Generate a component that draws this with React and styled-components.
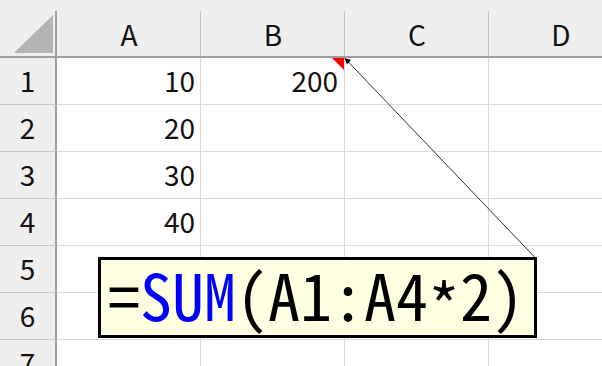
import React from "react";
import styled, { createGlobalStyle } from "styled-components";

const Global = createGlobalStyle`
  html, body { margin: 0; padding: 0; background: #fff; overflow: hidden; }
  body { width: 602px; height: 366px; }
`;

const Sheet = styled.div`
  position: relative;
  width: 602px;
  height: 366px;
  overflow: hidden;
  font-family: "Noto Sans CJK JP", "Noto Sans", sans-serif;
`;

const Grid = styled.div`
  display: grid;
  grid-template-columns: 57px repeat(4, 144px);
  grid-template-rows: 58px repeat(7, 47px);
`;

const Corner = styled.div`
  position: relative;
  background: #efefef;
  border-bottom: 2px solid #9f9f9f;
  display: flex;
  align-items: flex-end;
  justify-content: flex-end;
  padding: 0 4px 3px 0;
  &::after {
    content: "";
    position: absolute;
    right: 0;
    top: 11px;
    bottom: 0;
    width: 2px;
    background: #9f9f9f;
  }
`;

const SelectAll = styled.div`
  width: 39px;
  height: 38px;
  background: #b4b4b4;
  clip-path: polygon(100% 0, 100% 100%, 0 100%);
`;

const ColHeader = styled.div`
  position: relative;
  background: #efefef;
  border-bottom: 2px solid #9f9f9f;
  display: flex;
  align-items: center;
  justify-content: center;
  padding-top: 11px;
  font-size: 28px;
  color: #111;
  &::after {
    content: "";
    position: absolute;
    right: 0;
    top: 11px;
    bottom: 0;
    width: 1px;
    background: #c2c2c2;
  }
`;

const RowHeader = styled.div`
  background: #efefef;
  border-right: 2px solid #9f9f9f;
  border-bottom: 1px solid #c8c8c8;
  display: flex;
  align-items: center;
  justify-content: center;
  padding-bottom: 3px;
  font-size: 28px;
  color: #111;
`;

const Cell = styled.div`
  position: relative;
  border-right: 1px solid #dadada;
  border-bottom: 1px solid #dadada;
  display: flex;
  align-items: center;
  justify-content: flex-end;
  padding: 0 ${(p) => p.$pr || 5}px 3px 0;
  font-size: 28px;
  color: #111;
`;

const CommentMark = styled.div`
  position: absolute;
  top: 0;
  right: 0;
  width: 12px;
  height: 12px;
  background: #ff0000;
  clip-path: polygon(0 0, 100% 0, 100% 100%);
`;

const Leader = styled.svg`
  position: absolute;
  left: 0;
  top: 0;
  pointer-events: none;
`;

const Comment = styled.div`
  position: absolute;
  left: 98px;
  top: 257px;
  width: 439px;
  height: 81px;
  box-sizing: border-box;
  border: 3px solid #000;
  background: #ffffe1;
  display: flex;
  align-items: center;
  padding: 0 0 0 7px;
  font-family: "Noto Sans Mono CJK JP", "Noto Sans CJK JP", monospace;
  font-size: 64px;
  line-height: 1;
  color: #000;
  white-space: pre;
`;

const Fn = styled.span`
  color: #0000ff;
`;

const Star = styled.span`
  vertical-align: -10px;
`;

const columns = ["A", "B", "C", "D"];
const rows = [
  ["10", "200", "", ""],
  ["20", "", "", ""],
  ["30", "", "", ""],
  ["40", "", "", ""],
  ["", "", "", ""],
  ["", "", "", ""],
  ["", "", "", ""],
];

export default function App() {
  return (
    <Sheet>
      <Global />
      <Grid>
        <Corner>
          <SelectAll />
        </Corner>
        {columns.map((c) => (
          <ColHeader key={c}>{c}</ColHeader>
        ))}
        {rows.map((r, i) => (
          <React.Fragment key={i}>
            <RowHeader>{i + 1}</RowHeader>
            {r.map((v, j) => (
              <Cell key={j} $pr={j === 1 ? 6 : 5}>
                {v}
                {i === 0 && j === 1 && <CommentMark />}
              </Cell>
            ))}
          </React.Fragment>
        ))}
      </Grid>
      <Leader width="602" height="366" viewBox="0 0 602 366">
        <line x1="346" y1="59.5" x2="535.5" y2="258" stroke="#333" strokeWidth="1" />
        <polygon points="344.5,58 351,60 347,64.5" fill="#000" />
      </Leader>
      <Comment>
        <span>
          =<Fn>SUM</Fn>(A1:A4<Star>*</Star>2)
        </span>
      </Comment>
    </Sheet>
  );
}
